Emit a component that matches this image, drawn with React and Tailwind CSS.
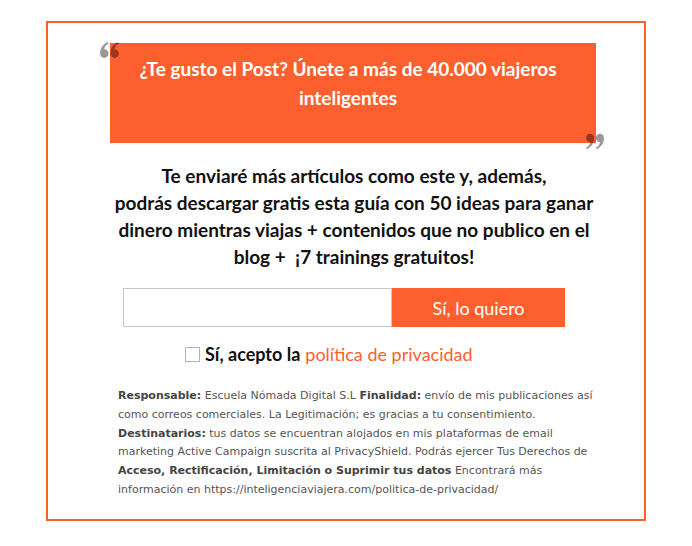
import React from 'react'

const QuoteLeft = ({ className }) => (
  <svg viewBox="0 0 20 17" className={className} fill="rgba(0,0,0,0.4)">
    <path d="M4.5 17C2 17 0 15 0 12.3 0 7 2.5 2.5 8 0l1 1.6C6 3.3 4.6 5.6 4.4 7.7 7 7.8 9 9.7 9 12.3 9 15 7 17 4.5 17Z" />
    <path d="M15.5 17C13 17 11 15 11 12.3 11 7 13.5 2.5 19 0l1 1.6C17 3.3 15.6 5.6 15.4 7.7 18 7.8 20 9.7 20 12.3 20 15 18 17 15.5 17Z" />
  </svg>
)

const QuoteRight = ({ className }) => (
  <svg viewBox="0 0 20 17" className={className} fill="rgba(0,0,0,0.4)">
    <g transform="rotate(180 10 8.5)">
      <path d="M4.5 17C2 17 0 15 0 12.3 0 7 2.5 2.5 8 0l1 1.6C6 3.3 4.6 5.6 4.4 7.7 7 7.8 9 9.7 9 12.3 9 15 7 17 4.5 17Z" />
      <path d="M15.5 17C13 17 11 15 11 12.3 11 7 13.5 2.5 19 0l1 1.6C17 3.3 15.6 5.6 15.4 7.7 18 7.8 20 9.7 20 12.3 20 15 18 17 15.5 17Z" />
    </g>
  </svg>
)

export default function App() {
  return (
    <div className="w-[692px] h-[546px] bg-white pt-[21px] pl-[46px] font-['Lato','Liberation_Sans',sans-serif]">
      <div className="w-[600px] h-[500px] border-2 border-[#fe5f2e] flex flex-col">
        <div className="relative ml-[62px] mt-[20px] w-[486px] h-[100px] bg-[#fe5f2e] pl-[10px] pr-[20px] pt-[11px] text-center text-white text-[19px] font-bold leading-[29px]">
          <QuoteLeft className="absolute left-[-10px] top-[-1px] w-[19px] h-[16px]" />
          ¿Te gusto el Post? Únete a más de 40.000 viajeros inteligentes
          <QuoteRight className="absolute right-[-8px] top-[90px] w-[18px] h-[17px]" />
        </div>

        <p className="mt-[19px] ml-[36px] w-[540px] text-center text-[19px] font-bold leading-[27px] text-[#111]">
          Te enviaré más artículos como este y, además,
          <br />
          podrás descargar gratis esta guía con 50 ideas para ganar
          <br />
          dinero mientras viajas + contenidos que no publico en el
          <br />
          blog +{'\u00a0 '}¡7 trainings gratuitos!
        </p>

        <div className="mt-[18px] ml-[75px] flex h-[39px]">
          <input
            type="text"
            className="w-[269px] h-full border border-[#c8c8c8] bg-white outline-none"
          />
          <button className="w-[173px] h-full bg-[#fe5f2e] text-white text-[18px] leading-none">
            Sí, lo quiero
          </button>
        </div>

        <label className="mt-[16px] ml-[137px] flex items-center gap-[5px] text-[18px] leading-[22px]">
          <span className="w-[15px] h-[15px] border border-[#b0b4b8] bg-white" />
          <span className="font-bold text-[#111]">Sí, acepto la</span>
          <span className="text-[#fe5f2e]">política de privacidad</span>
        </label>

        <div className="mt-[22px] ml-[70px] w-[490px] font-['DejaVu_Sans',Verdana,sans-serif] text-[11px] leading-[18.8px] text-[#555]">
          <b className="text-[#444]">Responsable:</b> Escuela Nómada Digital S.L <b className="text-[#444]">Finalidad:</b> envío de mis publicaciones así como correos comerciales. La Legitimación; es gracias a tu consentimiento.
          <br />
          <b className="text-[#444]">Destinatarios:</b> tus datos se encuentran alojados en mis plataformas de email marketing Active Campaign suscrita al PrivacyShield. Podrás ejercer Tus Derechos de <b className="text-[#444]">Acceso, Rectificación, Limitación o Suprimir tus datos</b> Encontrará más información en https://inteligenciaviajera.com/politica-de-privacidad/
        </div>
      </div>
    </div>
  )
}
